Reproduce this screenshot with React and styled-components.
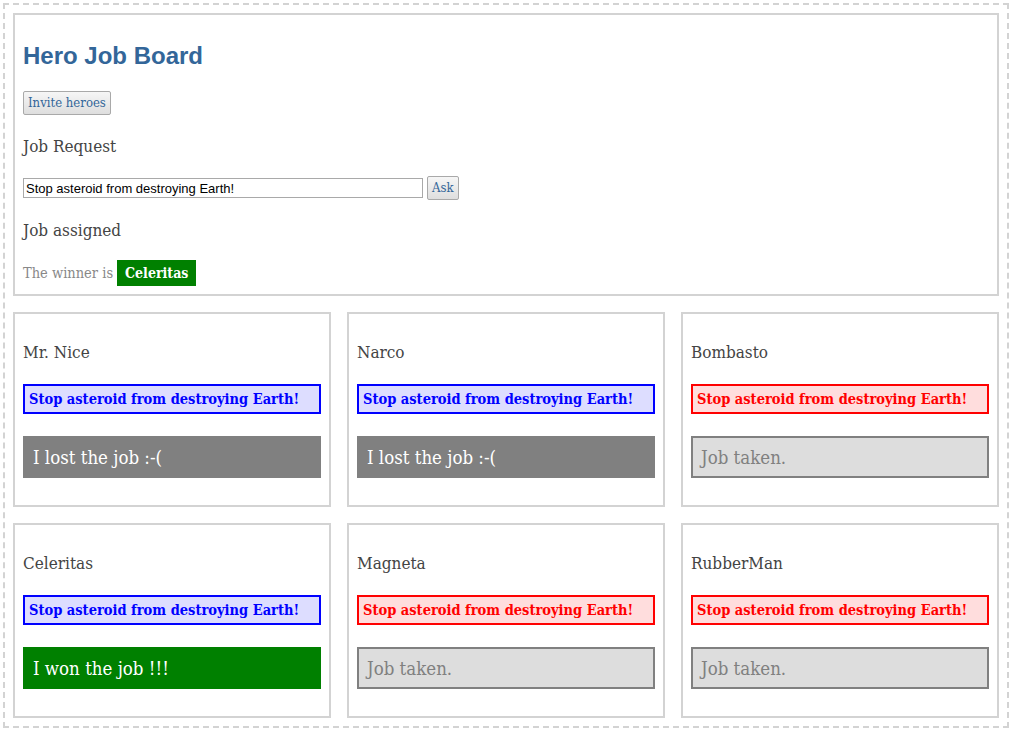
import React from "react";
import styled, { createGlobalStyle } from "styled-components";

const serif = `"DejaVu Serif Condensed", "DejaVu Serif", "Liberation Serif", serif`;

const GlobalStyle = createGlobalStyle`
  html, body {
    margin: 0;
    padding: 0;
    background: #fff;
  }
  body {
    font-family: ${serif};
    font-stretch: condensed;
    color: #444;
  }
`;

const Board = styled.div`
  margin: 3px 5px 3px 3px;
  border: 2px dashed #d3d3d3;
  padding: 8px;
  display: flex;
  flex-direction: column;
  gap: 16px;
`;

const Panel = styled.div`
  border: 2px solid #d3d3d3;
  padding: 0 8px 8px;
  background: #fff;
`;

const Title = styled.h2`
  font-family: "Liberation Sans", Arial, sans-serif;
  font-size: 24px;
  font-weight: bold;
  color: #369;
  margin: 27px 0 21px;
  line-height: 28px;
`;

const SmallButton = styled.button`
  font-family: ${serif};
  font-stretch: condensed;
  font-size: 13px;
  color: #369;
  background: linear-gradient(#f6f6f6, #dedede);
  border: 1px solid #a9a9a9;
  border-radius: 2px;
  padding: 3px 4px;
  line-height: 16px;
  cursor: pointer;
`;

const SectionTitle = styled.h3`
  font-size: 17px;
  font-weight: normal;
  color: #444;
  margin: ${p => p.$top}px 0 ${p => p.$bottom}px;
  line-height: 22px;
`;

const AskRow = styled.div`
  display: flex;
  align-items: center;
  gap: 4px;
`;

const TextInput = styled.input`
  width: 400px;
  height: 20px;
  box-sizing: border-box;
  border: 1px solid #a9a9a9;
  font-family: "Liberation Sans", Arial, sans-serif;
  font-size: 13px;
  padding: 0 2px;
  color: #000;
`;

const Winner = styled.div`
  display: flex;
  align-items: center;
  gap: 4px;
  font-size: 14.5px;
  color: #888;
`;

const Badge = styled.span`
  background: green;
  color: #fff;
  font-weight: bold;
  padding: 0 8px;
  height: 26px;
  line-height: 26px;
  font-size: 14px;
`;

const Grid = styled.div`
  display: grid;
  grid-template-columns: repeat(3, 1fr);
  gap: 16px 16px;
`;

const Card = styled(Panel)`
  padding: 0 8px 8px;
`;

const JobBox = styled.div`
  font-weight: bold;
  font-size: 14.5px;
  line-height: 16px;
  padding: 5px 4px;
  height: 30px;
  box-sizing: border-box;
  white-space: nowrap;
  border: 2px solid ${p => (p.$taken ? "red" : "blue")};
  background: ${p => (p.$taken ? "#fdd" : "#ddf")};
  color: ${p => (p.$taken ? "red" : "blue")};
`;

const Result = styled.div`
  margin: 22px 0 19px;
  height: 42px;
  box-sizing: border-box;
  display: flex;
  align-items: center;
  font-size: 18.5px;
  background: ${p => (p.$state === "won" ? "green" : p.$state === "lost" ? "gray" : "#ddd")};
  color: ${p => (p.$state === "taken" ? "gray" : "#fff")};
  border: ${p => (p.$state === "taken" ? "2px solid gray" : "none")};
  padding: 0 ${p => (p.$state === "taken" ? 8 : 10)}px;
`;

const job = "Stop asteroid from destroying Earth!";

const heroes = [
  { name: "Mr. Nice", taken: false, state: "lost" },
  { name: "Narco", taken: false, state: "lost" },
  { name: "Bombasto", taken: true, state: "taken" },
  { name: "Celeritas", taken: false, state: "won" },
  { name: "Magneta", taken: true, state: "taken" },
  { name: "RubberMan", taken: true, state: "taken" },
];

const resultText = {
  lost: "I lost the job :-(",
  won: "I won the job !!!",
  taken: "Job taken.",
};

export default function App() {
  return (
    <>
      <GlobalStyle />
      <Board>
        <Panel>
          <Title>Hero Job Board</Title>
          <SmallButton>Invite heroes</SmallButton>
          <SectionTitle $top={20} $bottom={19}>Job Request</SectionTitle>
          <AskRow>
            <TextInput defaultValue={job} />
            <SmallButton>Ask</SmallButton>
          </AskRow>
          <SectionTitle $top={19} $bottom={19}>Job assigned</SectionTitle>
          <Winner>
            The winner is <Badge>Celeritas</Badge>
          </Winner>
        </Panel>
        <Grid>
          {heroes.map(h => (
            <Card key={h.name}>
              <SectionTitle $top={27} $bottom={21}>{h.name}</SectionTitle>
              <JobBox $taken={h.taken}>{job}</JobBox>
              <Result $state={h.state}>{resultText[h.state]}</Result>
            </Card>
          ))}
        </Grid>
      </Board>
    </>
  );
}
